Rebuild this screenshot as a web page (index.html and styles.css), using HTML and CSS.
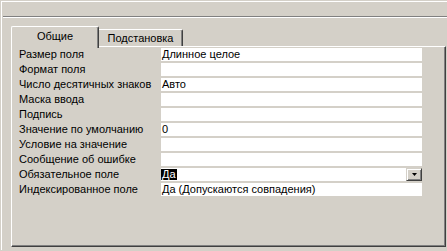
FILE: index.html
```html
<!DOCTYPE html>
<html>
<head>
<meta charset="utf-8">
<link rel="stylesheet" href="styles.css">
</head>
<body>
<div class="window">
  <div class="sep"></div>
  <div class="tabctl">
    <div class="tabs">
      <div class="tab active">Общие</div>
      <div class="tab">Подстановка</div>
    </div>
    <div class="panel">
      <div class="row"><div class="lbl">Размер поля</div><div class="val">Длинное целое</div></div>
      <div class="row"><div class="lbl">Формат поля</div><div class="val"></div></div>
      <div class="row"><div class="lbl">Число десятичных знаков</div><div class="val">Авто</div></div>
      <div class="row"><div class="lbl">Маска ввода</div><div class="val"></div></div>
      <div class="row"><div class="lbl">Подпись</div><div class="val"></div></div>
      <div class="row"><div class="lbl">Значение по умолчанию</div><div class="val">0</div></div>
      <div class="row"><div class="lbl">Условие на значение</div><div class="val"></div></div>
      <div class="row"><div class="lbl">Сообщение об ошибке</div><div class="val"></div></div>
      <div class="row"><div class="lbl">Обязательное поле</div><div class="val combo"><span class="sel">Да</span><span class="ddbtn"><svg width="5" height="3" viewBox="0 0 5 3"><path d="M0 0H5L2.5 3Z" fill="#000"/></svg></span></div></div>
      <div class="row"><div class="lbl">Индексированное поле</div><div class="val">Да (Допускаются совпадения)</div></div>
    </div>
  </div>
</div>
</body>
</html>
```
FILE: styles.css
```css
html, body {
  margin: 0;
  padding: 0;
  background: #d4d0c8;
  width: 447px;
  height: 251px;
  overflow: hidden;
  font-family: "Liberation Sans", Arial, sans-serif;
  font-size: 11px;
  color: #000;
}
.window {
  margin: 1px 0 0 1px;
  border-top: 1px solid #fff;
  border-left: 1px solid #fff;
  height: 249px;
  box-sizing: border-box;
}
.sep {
  margin: 14px 0 0 1px;
  height: 2px;
  border-top: 1px solid #808080;
  border-bottom: 1px solid #fff;
  box-sizing: border-box;
}
.tabctl {
  margin: 8px 0 0 9px;
  width: 435px;
}
.tabs {
  display: flex;
  align-items: flex-end;
  height: 20px;
}
.tab {
  box-sizing: border-box;
  height: 17px;
  width: 84px;
  border-top: 1px solid #fff;
  border-right: 1px solid #404040;
  box-shadow: inset -1px 0 0 #808080;
  border-top-right-radius: 2px;
  text-align: center;
  line-height: 15px;
  padding-top: 1px;
  background: #d4d0c8;
}
.tab.active {
  position: relative;
  z-index: 1;
  width: 88px;
  height: 22px;
  margin-bottom: -2px;
  border-left: 1px solid #fff;
  border-top-left-radius: 2px;
  line-height: 18px;
  padding-top: 0;
}
.panel {
  box-sizing: border-box;
  height: 201px;
  border-top: 1px solid #fff;
  border-left: 1px solid #fff;
  border-right: 1px solid #404040;
  border-bottom: 1px solid #404040;
  box-shadow: inset -1px -1px 0 #808080;
  padding-top: 1px;
  display: flex;
  flex-direction: column;
  gap: 2px;
}
.row {
  display: flex;
  height: 13px;
  line-height: 13px;
}
.lbl {
  width: 142px;
  padding-left: 7px;
  white-space: nowrap;
}
.val {
  width: 261px;
  background: #fff;
  padding-left: 1px;
  box-sizing: border-box;
  white-space: nowrap;
}
.combo {
  display: flex;
  justify-content: space-between;
  align-items: center;
  padding-left: 0;
}
.sel {
  background: #000;
  color: #fff;
  height: 11px;
  line-height: 11px;
  padding: 0 1px;
}
.ddbtn {
  box-sizing: border-box;
  width: 16px;
  height: 13px;
  background: #d4d0c8;
  border-top: 1px solid #d4d0c8;
  border-left: 1px solid #d4d0c8;
  border-right: 1px solid #404040;
  border-bottom: 1px solid #404040;
  box-shadow: inset 1px 1px 0 #fff, inset -1px -1px 0 #808080;
  display: flex;
  align-items: center;
  justify-content: center;
}
.ddbtn svg { display: block; }
```
